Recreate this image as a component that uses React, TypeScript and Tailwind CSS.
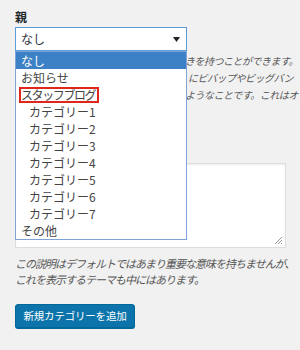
import React from 'react';

const font = { fontFamily: '"Noto Sans CJK JP", "Noto Sans", sans-serif' };

const options = [
  { name: 'なし', depth: 0 },
  { name: 'お知らせ', depth: 0 },
  { name: 'スタッフブログ', depth: 0, marked: true },
  { name: 'カテゴリー1', depth: 1 },
  { name: 'カテゴリー2', depth: 1 },
  { name: 'カテゴリー3', depth: 1 },
  { name: 'カテゴリー4', depth: 1 },
  { name: 'カテゴリー5', depth: 1 },
  { name: 'カテゴリー6', depth: 1 },
  { name: 'カテゴリー7', depth: 1 },
  { name: 'その他', depth: 0 },
];

// tails of the help text that peek out to the right of the open list
const hintTails = ['きを持つことができます。', 'にビバップやビッグバン', 'ようなことです。これはオ'];

function ParentSelect() {
  return (
    <div className="relative">
      <div className="flex h-[24px] w-[172px] items-center justify-between border border-[#5b9dd9] bg-white pl-[5px] pr-[6px] text-[12px] text-[#32373c]">
        <span>なし</span>
        <svg width="7" height="5" viewBox="0 0 7 5">
          <path d="M0 0h7L3.5 5z" fill="#222" />
        </svg>
      </div>

      {/* open dropdown list */}
      <ul className="absolute left-0 top-[24px] z-10 w-[172px] border border-[#7fa3d6] bg-white text-[12px] text-[#444]">
        {options.map((opt, i) => (
          <li
            key={opt.name}
            className={
              'flex h-[17px] items-center leading-none ' +
              (i === 0 ? 'bg-[#3c80c5] text-white ' : '') +
              (opt.depth ? 'pl-[11px]' : 'pl-[3px]')
            }
          >
            {opt.marked ? (
              <span className="flex h-[16px] items-center border-2 border-[#e0251b] pr-[2px] tracking-[-1.4px]">
                {opt.name}
              </span>
            ) : (
              <span className="pl-[2px]">{opt.name}</span>
            )}
          </li>
        ))}
      </ul>
    </div>
  );
}

export default function App() {
  return (
    <div className="h-[350px] w-[300px] overflow-hidden bg-[#f1f1f1] px-[15px] pt-[9px]" style={font}>
      <label className="block text-[12px] font-bold leading-[16px] text-[#23282d]">親</label>
      <div className="mt-[2px]">
        <ParentSelect />
      </div>

      <div className="-mr-[8px] ml-[170px] mt-[1px] text-[10px] italic leading-[17px] tracking-[-0.5px] text-[#555]">
        {hintTails.map((t) => (
          <p key={t} className="whitespace-nowrap text-right">
            {t}
          </p>
        ))}
      </div>

      <div className="relative mt-[60px] h-[85px] w-[271px] border border-[#ddd] bg-white shadow-[inset_0_1px_2px_rgba(0,0,0,0.07)]">
        <svg className="absolute bottom-[2px] right-[2px]" width="9" height="9" viewBox="0 0 9 9">
          <path d="M8 1L1 8M8 4L4 8M8 7L7 8" stroke="#999" strokeWidth="1" />
        </svg>
      </div>

      <div className="mt-[7px] text-[11px] italic leading-[16px] tracking-[-1px] text-[#555]">
        <p className="whitespace-nowrap">この説明はデフォルトではあまり重要な意味を持ちませんが、</p>
        <p className="whitespace-nowrap">これを表示するテーマも中にはあります。</p>
      </div>

      <button className="mt-[17px] flex h-[24px] w-[120px] items-center justify-center rounded-[3px] border border-[#006799] bg-[#0c74aa] text-[10.5px] tracking-[-0.2px] text-white shadow-[0_1px_0_#006799]">
        新規カテゴリーを追加
      </button>
    </div>
  );
}
